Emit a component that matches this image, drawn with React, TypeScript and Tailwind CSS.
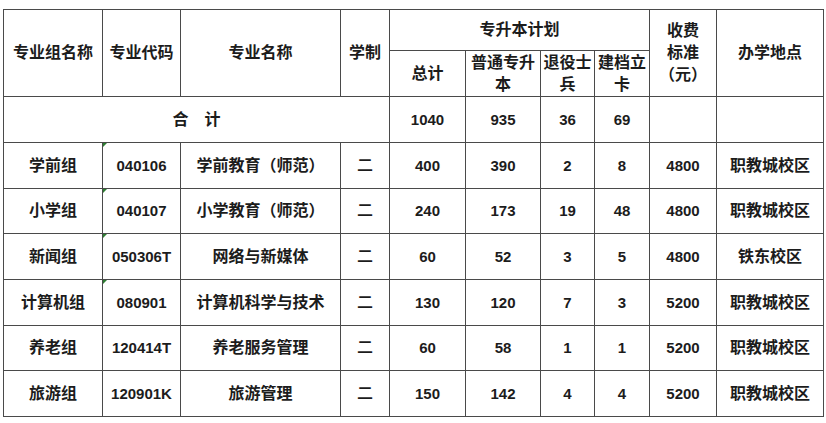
import React from "react";

const rows = [
  { g: "学前组", c: "040106", n: "学前教育（师范）", t: "400", p: "390", v: "2", k: "8", f: "4800", l: "职教城校区", h: "h-[46px]" },
  { g: "小学组", c: "040107", n: "小学教育（师范）", t: "240", p: "173", v: "19", k: "48", f: "4800", l: "职教城校区", h: "h-[45px]" },
  { g: "新闻组", c: "050306T", n: "网络与新媒体", t: "60", p: "52", v: "3", k: "5", f: "4800", l: "铁东校区", h: "h-[46px]" },
  { g: "计算机组", c: "080901", n: "计算机科学与技术", t: "130", p: "120", v: "7", k: "3", f: "5200", l: "职教城校区", h: "h-[46px]" },
  { g: "养老组", c: "120414T", n: "养老服务管理", t: "60", p: "58", v: "1", k: "1", f: "5200", l: "职教城校区", h: "h-[45px]" },
  { g: "旅游组", c: "120901K", n: "旅游管理", t: "150", p: "142", v: "4", k: "4", f: "5200", l: "职教城校区", h: "h-[46px]" },
];

const cell = "border border-[#4a4a4a] text-center align-middle p-0";

export default function App() {
  return (
    <div
      className="w-[826px] h-[423px] bg-white pt-[9px] pl-[3px] text-[#1c1c1c] font-bold text-[16px] leading-[22px]"
      style={{ fontFamily: "'Liberation Sans', 'Noto Sans CJK SC', sans-serif" }}
    >
      <table className="border-collapse table-fixed w-[820px]">
        <colgroup>
          <col className="w-[99px]" />
          <col className="w-[78px]" />
          <col className="w-[160px]" />
          <col className="w-[49px]" />
          <col className="w-[76px]" />
          <col className="w-[75px]" />
          <col className="w-[54px]" />
          <col className="w-[55px]" />
          <col className="w-[67px]" />
          <col className="w-[107px]" />
        </colgroup>
        <tbody>
          <tr className="h-[41px]">
            <td rowSpan={2} className={cell}>专业组名称</td>
            <td rowSpan={2} className={cell}>专业代码</td>
            <td rowSpan={2} className={cell}>专业名称</td>
            <td rowSpan={2} className={cell}>学制</td>
            <td colSpan={4} className={cell}>专升本计划</td>
            <td rowSpan={2} className={cell}>
              收费<br />标准<br />（元）
            </td>
            <td rowSpan={2} className={cell}>办学地点</td>
          </tr>
          <tr className="h-[46px]">
            <td className={cell}>总计</td>
            <td className={cell}>普通专升<br />本</td>
            <td className={cell}>退役士<br />兵</td>
            <td className={cell}>建档立<br />卡</td>
          </tr>
          <tr className="h-[46px]">
            <td colSpan={4} className={cell}>合　计</td>
            <td className={`${cell} text-[15px]`}>1040</td>
            <td className={`${cell} text-[15px]`}>935</td>
            <td className={`${cell} text-[15px]`}>36</td>
            <td className={`${cell} text-[15px]`}>69</td>
            <td className={cell}></td>
            <td className={cell}></td>
          </tr>
          {rows.map((r, i) => (
            <tr key={i} className={r.h}>
              <td className={cell}>{r.g}</td>
              <td className={`${cell} text-[15px] relative`}>
                {i < 4 && (
                  <span className="absolute left-0 top-0 w-0 h-0 border-t-[4px] border-r-[4px] border-t-[#2e7d32] border-r-transparent" />
                )}
                {r.c}
              </td>
              <td className={cell}>{r.n}</td>
              <td className={`${cell} font-medium`}>二</td>
              <td className={`${cell} text-[15px]`}>{r.t}</td>
              <td className={`${cell} text-[15px]`}>{r.p}</td>
              <td className={`${cell} text-[15px]`}>{r.v}</td>
              <td className={`${cell} text-[15px]`}>{r.k}</td>
              <td className={`${cell} text-[15px]`}>{r.f}</td>
              <td className={cell}>{r.l}</td>
            </tr>
          ))}
        </tbody>
      </table>
    </div>
  );
}
